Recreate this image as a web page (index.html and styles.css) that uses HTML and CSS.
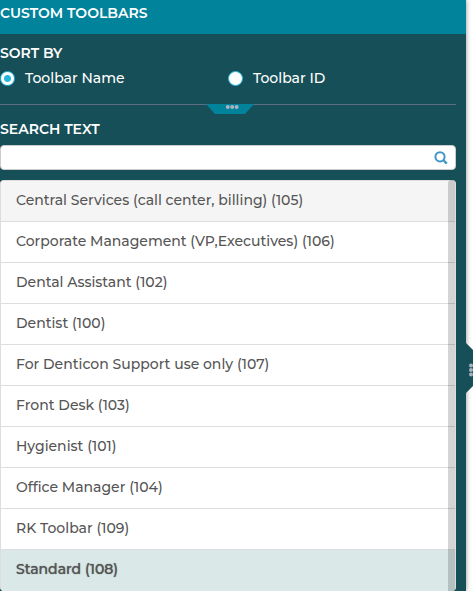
FILE: index.html
```html
<!DOCTYPE html>
<html lang="en">
<head>
<meta charset="utf-8">
<meta name="viewport" content="width=device-width, initial-scale=1">
<title>Custom Toolbars</title>
<link rel="stylesheet" href="styles.css">
</head>
<body>
<aside class="panel">
  <h1 class="panel-title">CUSTOM TOOLBARS</h1>
  <fieldset class="sort">
    <legend class="caption">SORT BY</legend>
    <div class="options">
      <label class="option"><input type="radio" name="sort" checked>Toolbar Name</label>
      <label class="option"><input type="radio" name="sort">Toolbar ID</label>
    </div>
  </fieldset>
  <div class="divider">
    <button class="fold" type="button" aria-label="Collapse options">
      <svg width="48" height="10" viewBox="0 0 48 10"><path d="M0 0H48L39 10H9Z" fill="#00839b"/><g fill="#a9b3bf"><circle cx="21.8" cy="3" r="2"/><circle cx="26.2" cy="3" r="2"/><circle cx="30.6" cy="3" r="2"/></g></svg>
    </button>
  </div>
  <div class="search">
    <label class="caption" for="search">SEARCH TEXT</label>
    <div class="search-box">
      <input id="search" type="text">
      <button class="search-button" type="button" aria-label="Search">
        <svg width="14" height="14" viewBox="0 0 14 14" fill="none" stroke="#4197c9" stroke-width="2"><circle cx="6" cy="5.8" r="4.6"/><path d="M9.2 9L12.8 12.6" stroke-width="2.4"/></svg>
      </button>
    </div>
  </div>
  <div class="list-frame">
    <ul class="list">
      <li class="item hovered">Central Services (call center, billing) (105)</li>
      <li class="item">Corporate Management (VP,Executives) (106)</li>
      <li class="item">Dental Assistant (102)</li>
      <li class="item">Dentist (100)</li>
      <li class="item">For Denticon Support use only (107)</li>
      <li class="item">Front Desk (103)</li>
      <li class="item">Hygienist (101)</li>
      <li class="item">Office Manager (104)</li>
      <li class="item">RK Toolbar (109)</li>
      <li class="item selected">Standard (108)</li>
    </ul>
    <div class="scroll-track"></div>
  </div>
  <button class="side-handle" type="button" aria-label="Collapse panel">
    <svg width="20" height="50" viewBox="0 0 20 50"><path d="M0 0L13 13V37L0 50Z" fill="#174f58"/><g fill="#a9b3bf"><circle cx="5" cy="22.6" r="2"/><circle cx="5" cy="27" r="2"/><circle cx="5" cy="31.4" r="2"/></g></svg>
  </button>
</aside>
</body>
</html>
```
FILE: styles.css
```css
* {
  box-sizing: border-box;
}

body {
  margin: 0;
  overflow-x: hidden;
  background: #fff;
  font: 500 14px/20px Montserrat, Inter, sans-serif;
  color: #fff;
}

button {
  padding: 0;
  border: 0;
  background: none;
  cursor: pointer;
}

svg {
  display: block;
}

.panel {
  position: relative;
  min-height: 100vh;
  margin-right: 7px;
  background: #174f58;
  box-shadow: 0 0 5px rgba(0, 0, 0, 0.45);
}

.panel-title {
  height: 34px;
  margin: 0;
  padding-top: 3px;
  background: #00839b;
  font-size: 14px;
  line-height: 20px;
  font-weight: 600;
}

.caption {
  display: block;
  padding: 0;
  font-weight: 600;
}

.sort {
  margin: 0 10px 0 0;
  padding: 9px 0 16px;
  border: 0;
}

.sort .caption {
  float: left;
  width: 100%;
}

.options {
  display: grid;
  clear: both;
  grid-template-columns: 1fr 1fr;
  padding-top: 5px;
}

.option {
  display: flex;
  align-items: center;
  gap: 10px;
}

.option input {
  appearance: none;
  width: 15px;
  height: 15px;
  margin: 0;
  border: 1px solid #23b7d9;
  border-radius: 50%;
  background: #fff;
}

.option input:checked {
  background: radial-gradient(circle, #23b7d9 3px, #fff 4px);
}

.divider {
  position: relative;
  margin-right: 10px;
  border-top: 1px solid #5f6d85;
}

.fold {
  position: absolute;
  top: -1px;
  left: 206px;
}

.search {
  margin-right: 10px;
  padding-top: 14px;
}

.search-box {
  position: relative;
  margin-top: 6px;
}

.search-box input {
  display: block;
  width: 100%;
  height: 25px;
  padding: 0 28px 0 8px;
  border: 1px solid #ccc;
  border-radius: 4px;
  background: #fff;
  font: inherit;
}

.search-button {
  position: absolute;
  top: 6px;
  right: 8px;
}

.list-frame {
  position: relative;
  margin: 10px 10px 0 0;
}

.list {
  overflow: hidden;
  margin: 0;
  padding: 0;
  border: 1px solid #ddd;
  border-bottom: 0;
  border-radius: 4px;
  background: #fff;
  list-style: none;
}

.item {
  height: 41px;
  padding: 9px 15px;
  border-bottom: 1px solid #ddd;
  color: #555;
}

.hovered {
  background: #f5f5f5;
}

.selected {
  border-color: #dae8e8;
  background: #dae8e8;
  text-shadow: 0 0 1px #555;
}

.scroll-track {
  position: absolute;
  top: 0;
  right: 1px;
  bottom: 0;
  width: 7px;
  border-radius: 4px 4px 0 0;
  background: rgba(0, 0, 0, 0.17);
}

.side-handle {
  position: absolute;
  top: 343px;
  left: 100%;
}
```
